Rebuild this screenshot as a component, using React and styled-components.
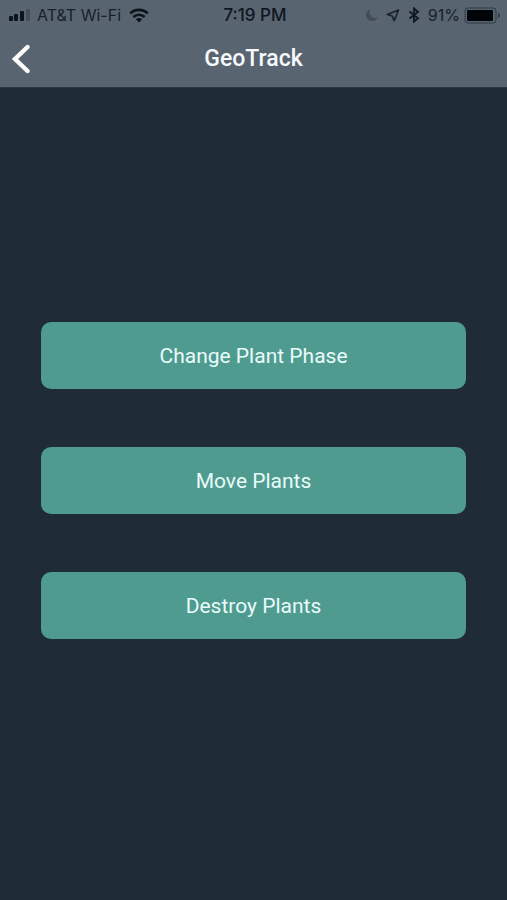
import React from "react";
import styled, { createGlobalStyle } from "styled-components";

const GlobalStyle = createGlobalStyle`
  *, *::before, *::after { box-sizing: border-box; }
  body {
    margin: 0;
    background: #202c35;
    font-family: Roboto, "Liberation Sans", sans-serif;
  }
`;

const Screen = styled.div`
  display: flex;
  flex-direction: column;
  min-height: 100vh;
  background: #202c35;
`;

const Header = styled.header`
  background: #58646f;
  border-bottom: 1px solid #2c3643;
`;

const StatusBar = styled.div`
  display: grid;
  grid-template-columns: 1fr auto 1fr;
  align-items: center;
  height: 30px;
  padding: 0 6px 0 9px;
  color: #17212b;
  font-family: Inter, "Liberation Sans", sans-serif;
  font-size: 16px;
  line-height: 20px;
  white-space: nowrap;
`;

const StatusGroup = styled.div`
  display: flex;
  align-items: center;
  justify-content: ${({ $end }) => ($end ? "flex-end" : "flex-start")};
  gap: ${({ $end }) => ($end ? "8px" : "6px")};

  svg { flex: none; }
`;

const Carrier = styled.span`
  margin-right: 2px;
`;

const Charge = styled.span`
  display: flex;
  align-items: center;
  gap: 4px;
`;

const Clock = styled.time`
  color: #0d1620;
  font-size: 17px;
  font-weight: 500;
`;

const NavBar = styled.div`
  display: grid;
  grid-template-columns: 44px 1fr 44px;
  align-items: center;
  height: 57px;
`;

const BackButton = styled.button`
  display: flex;
  align-items: center;
  height: 44px;
  padding: 0 0 0 11px;
  border: 0;
  background: none;
  color: #ffffff;
  cursor: pointer;
`;

const Title = styled.h1`
  margin: 0;
  color: #f6fafc;
  font-size: 23px;
  font-weight: 500;
  line-height: 27px;
  text-align: center;
`;

const Actions = styled.main`
  flex: 1;
  display: flex;
  flex-direction: column;
  justify-content: center;
  gap: 58px;
  padding: 0 41px 27px;
`;

const ActionButton = styled.button`
  height: 67px;
  border: 0;
  border-radius: 10px;
  background: #509b8f;
  color: #e9fbfa;
  font-family: inherit;
  font-size: 21px;
  line-height: 24px;
  cursor: pointer;
`;

const SignalIcon = () => (
  <svg width="22" height="14" viewBox="0 0 22 14" aria-hidden="true">
    <g fill="#0b131b">
      <rect x="0" y="8" width="4" height="5" rx="1" />
      <rect x="5" y="6" width="4" height="7" rx="1" />
      <rect x="11" y="3" width="4" height="10" rx="1" />
    </g>
    <rect x="17" y="1" width="4" height="12" rx="1" fill="#434e59" />
  </svg>
);

const WifiIcon = () => (
  <svg width="20" height="15" viewBox="0 0 20 15" aria-hidden="true">
    <g fill="none" stroke="#0b131b" strokeWidth="2.6">
      <path d="M1.2 5.4C6.1.7 13.9.7 18.8 5.4" />
      <path d="M4.4 9C7.5 6 12.5 6 15.6 9" />
    </g>
    <path d="M6.8 11.2C8.6 9.5 11.4 9.5 13.2 11.2L10 14.5Z" fill="#0b131b" />
  </svg>
);

const MoonIcon = () => (
  <svg width="12" height="12" viewBox="0 0 12 12" aria-hidden="true">
    <path d="M4.2.5A5.9 5.9 0 1 0 11.6 8.3 5.6 5.6 0 0 1 4.2.5Z" fill="#404b56" />
  </svg>
);

const LocationIcon = () => (
  <svg width="14" height="13" viewBox="0 0 14 13" aria-hidden="true">
    <path d="M12.6 1L1.4 5.6 6.2 7 8.2 11.6Z" fill="none" stroke="#17212b" strokeWidth="1.6" strokeLinejoin="round" />
  </svg>
);

const BluetoothIcon = () => (
  <svg width="12" height="16" viewBox="0 0 12 16" aria-hidden="true">
    <path d="M1.5 4.5L10 11.2 6 14.5V1.5L10 4.8 1.5 11.5" fill="none" stroke="#101a24" strokeWidth="1.9" />
  </svg>
);

const BatteryIcon = () => (
  <svg width="37" height="17" viewBox="0 0 37 17" aria-hidden="true">
    <rect x="1" y="1" width="31" height="15" rx="3" fill="none" stroke="#2c3843" strokeWidth="1" />
    <rect x="3" y="3" width="26" height="11" rx="1" fill="#01050a" />
    <path d="M34 6C36.5 6.5 36.5 10.5 34 11Z" fill="#303b46" />
  </svg>
);

const ChevronIcon = () => (
  <svg width="20" height="30" viewBox="0 0 20 30" aria-hidden="true">
    <path d="M16.5 3L4 15 16.5 27" fill="none" stroke="currentColor" strokeWidth="4.4" strokeLinecap="round" />
  </svg>
);

const actions = ["Change Plant Phase", "Move Plants", "Destroy Plants"];

export default function App() {
  return (
    <Screen>
      <GlobalStyle />
      <Header>
        <StatusBar>
          <StatusGroup>
            <SignalIcon />
            <Carrier>AT&amp;T Wi-Fi</Carrier>
            <WifiIcon />
          </StatusGroup>
          <Clock>7:19 PM</Clock>
          <StatusGroup $end>
            <MoonIcon />
            <LocationIcon />
            <BluetoothIcon />
            <Charge>
              91%
              <BatteryIcon />
            </Charge>
          </StatusGroup>
        </StatusBar>
        <NavBar>
          <BackButton type="button" aria-label="Back">
            <ChevronIcon />
          </BackButton>
          <Title>GeoTrack</Title>
        </NavBar>
      </Header>
      <Actions>
        {actions.map((label) => (
          <ActionButton key={label} type="button">{label}</ActionButton>
        ))}
      </Actions>
    </Screen>
  );
}
